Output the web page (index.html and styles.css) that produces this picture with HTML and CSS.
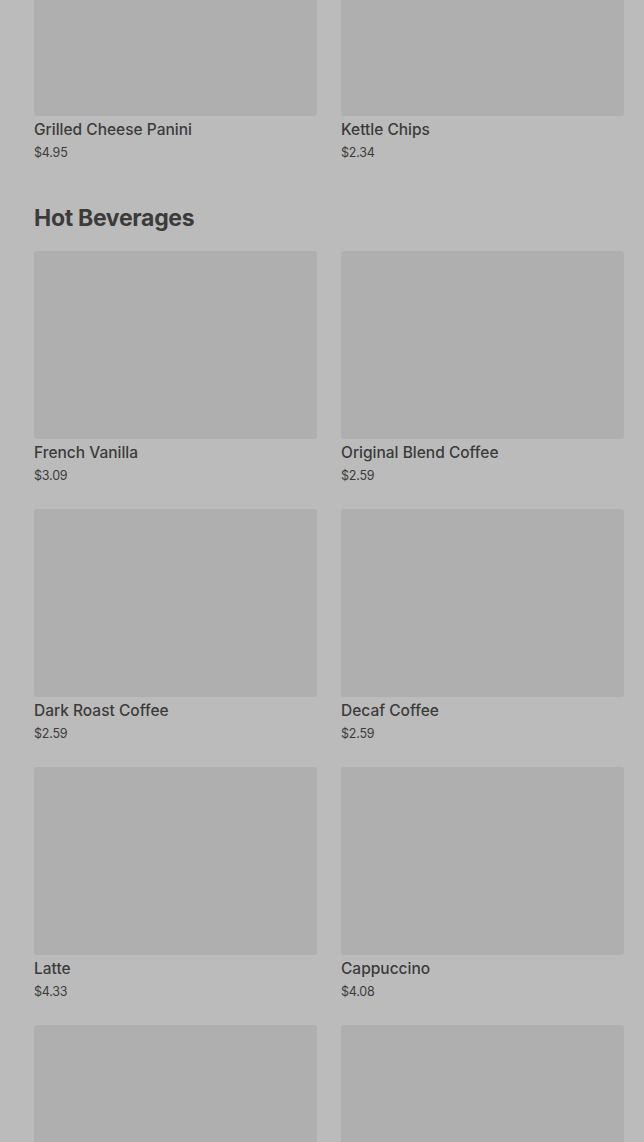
FILE: index.html
```html
<!DOCTYPE html>
<html lang="en">

<head>
    <meta charset="UTF-8">
    <title>Menu</title>
    <link rel="stylesheet" href="styles.css">
</head>

<body>
    <div class="menu">
        <section class="section section-first">
            <ul class="grid">
                <li class="item">
                    <div class="pic"></div>
                    <h3 class="name">Grilled Cheese Panini</h3>
                    <p class="price">$4.95</p>
                </li>
                <li class="item">
                    <div class="pic"></div>
                    <h3 class="name">Kettle Chips</h3>
                    <p class="price">$2.34</p>
                </li>
            </ul>
        </section>

        <section class="section">
            <h2 class="title">Hot Beverages</h2>
            <ul class="grid">
                <li class="item">
                    <div class="pic"></div>
                    <h3 class="name">French Vanilla</h3>
                    <p class="price">$3.09</p>
                </li>
                <li class="item">
                    <div class="pic"></div>
                    <h3 class="name">Original Blend Coffee</h3>
                    <p class="price">$2.59</p>
                </li>
                <li class="item">
                    <div class="pic"></div>
                    <h3 class="name">Dark Roast Coffee</h3>
                    <p class="price">$2.59</p>
                </li>
                <li class="item">
                    <div class="pic"></div>
                    <h3 class="name">Decaf Coffee</h3>
                    <p class="price">$2.59</p>
                </li>
                <li class="item">
                    <div class="pic"></div>
                    <h3 class="name">Latte</h3>
                    <p class="price">$4.33</p>
                </li>
                <li class="item">
                    <div class="pic"></div>
                    <h3 class="name">Cappuccino</h3>
                    <p class="price">$4.08</p>
                </li>
                <li class="item">
                    <div class="pic"></div>
                </li>
                <li class="item">
                    <div class="pic"></div>
                </li>
            </ul>
        </section>
    </div>
</body>

</html>
```

FILE: styles.css
```css
* {
    padding: 0;
    margin: 0;
    list-style: none;
    box-sizing: border-box;
}

html,
body {
    height: 100%;
    overflow: hidden;
}

body {
    background-color: #bbbbbb;
    color: #3b3b3b;
    font-family: Inter, "Noto Sans", sans-serif;
}

.menu {
    padding: 0 20px 0 34px;
}

/* page is scrolled, first row is cut at the top */
.section-first {
    margin-top: -72px;
}

.section {
    margin-bottom: 42px;
}

.title {
    font-size: 23px;
    line-height: 28px;
    font-weight: 700;
    letter-spacing: -0.3px;
    margin-bottom: 19px;
}

.grid {
    display: grid;
    grid-template-columns: 1fr 1fr;
    column-gap: 24px;
    row-gap: 24px;
}

.pic {
    height: 188px;
    background-color: #afafaf;
    border-radius: 3px;
}

.name {
    margin-top: 4px;
    font-size: 15.5px;
    line-height: 20px;
    font-weight: 500;
}

.price {
    margin-top: 4px;
    font-size: 12.5px;
    line-height: 18px;
    font-weight: 400;
    letter-spacing: -0.2px;
}
```
